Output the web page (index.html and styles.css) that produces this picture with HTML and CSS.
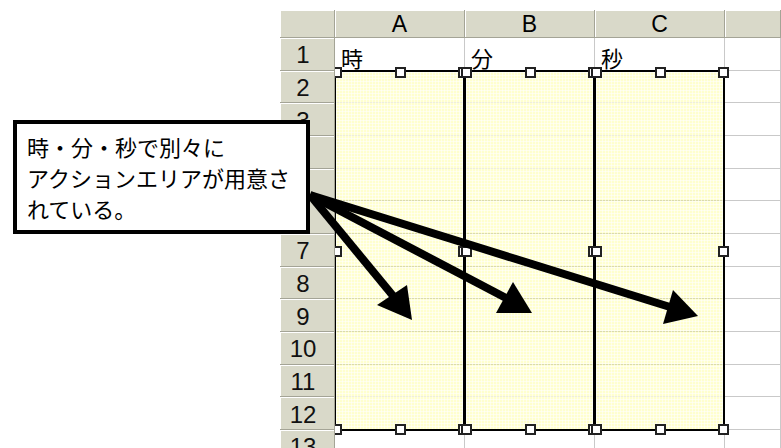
FILE: index.html
```html
<!DOCTYPE html>
<html lang="ja">

<head>
  <meta charset="utf8">
  <title>時・分・秒</title>
  <link rel="stylesheet" href="styles.css">
</head>

<body>
  <div class="sheet">
    <div class="head corner"></div>
    <div class="head col">A</div>
    <div class="head col">B</div>
    <div class="head col">C</div>
    <div class="head col"></div>

    <div class="head row">1</div><div class="cell">時</div><div class="cell">分</div><div class="cell">秒</div><div class="cell"></div>
    <div class="head row">2</div><div class="cell"></div><div class="cell"></div><div class="cell"></div><div class="cell"></div>
    <div class="head row">3</div><div class="cell"></div><div class="cell"></div><div class="cell"></div><div class="cell"></div>
    <div class="head row">4</div><div class="cell"></div><div class="cell"></div><div class="cell"></div><div class="cell"></div>
    <div class="head row">5</div><div class="cell"></div><div class="cell"></div><div class="cell"></div><div class="cell"></div>
    <div class="head row">6</div><div class="cell"></div><div class="cell"></div><div class="cell"></div><div class="cell"></div>
    <div class="head row">7</div><div class="cell"></div><div class="cell"></div><div class="cell"></div><div class="cell"></div>
    <div class="head row">8</div><div class="cell"></div><div class="cell"></div><div class="cell"></div><div class="cell"></div>
    <div class="head row">9</div><div class="cell"></div><div class="cell"></div><div class="cell"></div><div class="cell"></div>
    <div class="head row">10</div><div class="cell"></div><div class="cell"></div><div class="cell"></div><div class="cell"></div>
    <div class="head row">11</div><div class="cell"></div><div class="cell"></div><div class="cell"></div><div class="cell"></div>
    <div class="head row">12</div><div class="cell"></div><div class="cell"></div><div class="cell"></div><div class="cell"></div>
    <div class="head row">13</div><div class="cell"></div><div class="cell"></div><div class="cell"></div><div class="cell"></div>

    <!-- アクションエリア (選択中の図形) -->
    <div class="objects">
      <div class="areas">
        <div class="area">
          <span class="handle tl"></span><span class="handle tm"></span><span class="handle tr"></span>
          <span class="handle ml"></span><span class="handle mr"></span>
          <span class="handle bl"></span><span class="handle bm"></span><span class="handle br"></span>
        </div>
        <div class="area">
          <span class="handle tl"></span><span class="handle tm"></span><span class="handle tr"></span>
          <span class="handle ml"></span><span class="handle mr"></span>
          <span class="handle bl"></span><span class="handle bm"></span><span class="handle br"></span>
        </div>
        <div class="area">
          <span class="handle tl"></span><span class="handle tm"></span><span class="handle tr"></span>
          <span class="handle ml"></span><span class="handle mr"></span>
          <span class="handle bl"></span><span class="handle bm"></span><span class="handle br"></span>
        </div>
      </div>
    </div>
  </div>

  <div class="callout">時・分・秒で別々に<br>アクションエリアが用意さ<br>れている。</div>

  <svg class="arrows" width="781" height="448" viewBox="0 0 781 448">
    <g stroke="#000" stroke-width="8" fill="none">
      <line x1="310" y1="195" x2="394" y2="297" />
      <line x1="310" y1="195" x2="506" y2="298" />
      <line x1="310" y1="195" x2="670" y2="307" />
    </g>
    <g fill="#000">
      <polygon points="412,320 377,305 407,285" />
      <polygon points="532,313 496,313 513,282" />
      <polygon points="698,316 673,290 663,324" />
    </g>
  </svg>
</body>

</html>
```

FILE: styles.css
```css
/* General */
body {
  margin: 0;
  width: 781px;
  height: 448px;
  overflow: hidden;
  position: relative;
  background: #fff;
  font-family: "Liberation Sans", Arial, sans-serif;
  color: #000;
}

/* Hoja de cálculo */
.sheet {
  position: relative;
  margin: 10px 0 0 280px;
  display: grid;
  grid-template-columns: 55px 130px 130px 130px 1fr;
  grid-template-rows: 28px repeat(13, 32.67px);
}

/* Cabeceras de filas y columnas */
.head {
  background: #d9d9c9;
  box-sizing: border-box;
  border-right: 1px solid #a4a496;
  border-bottom: 1px solid #a4a496;
  box-shadow: inset 1px 1px 0 #fff;
  display: flex;
  align-items: center;
  justify-content: center;
}

.col {
  font-size: 23px;
  padding-top: 2px;
}

.row {
  font-size: 24px;
  padding: 3px 8px 0 0;
  color: #111;
}

/* Celdas */
.cell {
  box-sizing: border-box;
  border-right: 1px solid #c9c9c9;
  border-bottom: 1px solid #c9c9c9;
  font-family: "Noto Sans CJK JP", sans-serif;
  font-size: 22px;
  line-height: 1;
  padding: 8px 0 0 6px;
}

/* Capa de objetos (recortada por las cabeceras) */
.objects {
  position: absolute;
  left: 55px;
  top: 28px;
  right: 0;
  bottom: 0;
  overflow: hidden;
}

.areas {
  display: flex;
  margin: 32px 0 0 -1px;
}

.area {
  position: relative;
  box-sizing: border-box;
  width: 131px;
  height: 361px;
  margin-right: -1px;
  border: 2px solid #000;
  background-color: rgba(255, 255, 110, 0.34);
  background-image:
    linear-gradient(90deg, rgba(255, 255, 255, 0.55) 1px, transparent 1px),
    linear-gradient(rgba(255, 255, 255, 0.55) 1px, transparent 1px);
  background-size: 3px 3px;
}

/* Tiradores del área seleccionada */
.handle {
  position: absolute;
  box-sizing: border-box;
  width: 11px;
  height: 11px;
  background: #fff;
  border: 2px solid #222;
}

.tl, .tm, .tr { top: -5px; }
.bl, .bm, .br { bottom: -6px; }
.ml, .mr { top: calc(50% - 5px); }
.tl, .ml, .bl { left: -5px; }
.tr, .mr, .br { right: -6px; }
.tm, .bm { left: calc(50% - 5px); }

/* Cuadro de texto */
.callout {
  position: absolute;
  left: 13px;
  top: 120px;
  width: 297px;
  height: 114px;
  box-sizing: border-box;
  border: 4px solid #000;
  background: #fff;
  padding: 7px 0 0 10px;
  font-family: "Noto Sans CJK JP", sans-serif;
  font-size: 22px;
  line-height: 31px;
  white-space: nowrap;
}

/* Flechas */
.arrows {
  position: absolute;
  left: 0;
  top: 0;
}
```
